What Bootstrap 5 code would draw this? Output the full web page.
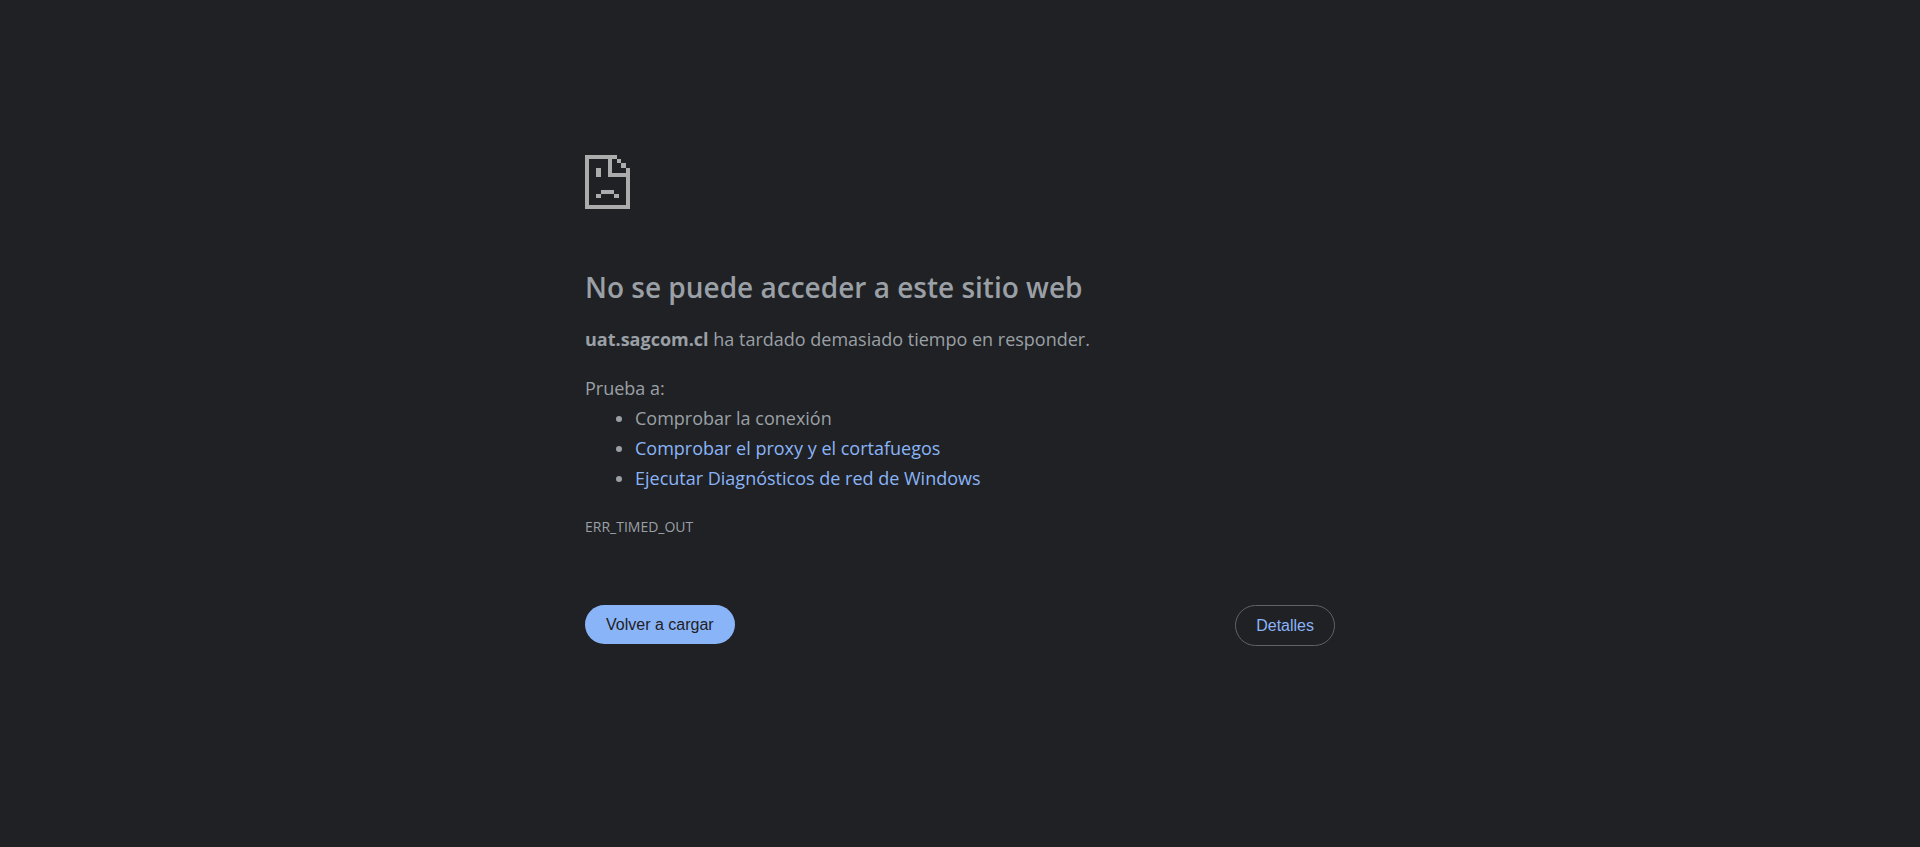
<!DOCTYPE html>
<html lang="es">
<head>
<meta charset="utf-8">
<meta name="viewport" content="width=device-width, initial-scale=1">
<title>uat.sagcom.cl</title>
<link href="https://cdn.jsdelivr.net/npm/bootstrap@5.3.0/dist/css/bootstrap.min.css" rel="stylesheet">
<style>
  body { background: #202124; color: #9aa0a6; font: 18px/30px "Open Sans", "Noto Sans", sans-serif; }
  .error-page { max-width: 750px; padding-top: 155px; }
  .error-icon { width: 45px; height: 54px; fill: #acacac; margin-bottom: 60px; }
  .error-title { font-size: 28px; line-height: 36px; font-weight: 600; margin-bottom: 19px; }
  .error-page p { margin-bottom: 19px; }
  .tips { padding-left: 50px; margin-bottom: 19px; }
  .tips a { color: #8ab4f8; text-decoration: none; }
  .error-code { font-size: 14px; }
  .actions { margin-top: 63px; }
  .actions .btn { font: 16px/23px "Liberation Sans", Arial, sans-serif; padding: 8px 21px; border-radius: 20px; border: 0; }
  .actions .btn-reload { background: #8ab4f8; color: #202124; }
  .actions .btn-details { border: 1px solid #5f6368; color: #8ab4f8; border-radius: 21px; padding: 8px 20px; }
</style>
</head>
<body>
<main class="error-page mx-auto">
  <svg class="error-icon d-block" viewBox="0 0 135 162" aria-hidden="true" shape-rendering="crispEdges">
    <path fill-rule="evenodd" d="M0 0H96V12H82V53H123V39H135V162H0ZM13 12V149H123V66H69V12Z"/>
    <path d="M96 12H108V25H96ZM108 25H122V39H108ZM33 39H47V66H33ZM47 104H88V117H47ZM33 117H47V130H33ZM88 117H102V130H88Z"/>
  </svg>
  <h1 class="error-title">No se puede acceder a este sitio web</h1>
  <p><strong>uat.sagcom.cl</strong> ha tardado demasiado tiempo en responder.</p>
  <div>Prueba a:</div>
  <ul class="tips">
    <li>Comprobar la conexión</li>
    <li><a href="#">Comprobar el proxy y el cortafuegos</a></li>
    <li><a href="#">Ejecutar Diagnósticos de red de Windows</a></li>
  </ul>
  <div class="error-code">ERR_TIMED_OUT</div>
  <div class="actions d-flex justify-content-between align-items-start">
    <button type="button" class="btn btn-reload">Volver a cargar</button>
    <button type="button" class="btn btn-details">Detalles</button>
  </div>
</main>
<script src="https://cdn.jsdelivr.net/npm/bootstrap@5.3.0/dist/js/bootstrap.bundle.min.js"></script>
</body>
</html>
